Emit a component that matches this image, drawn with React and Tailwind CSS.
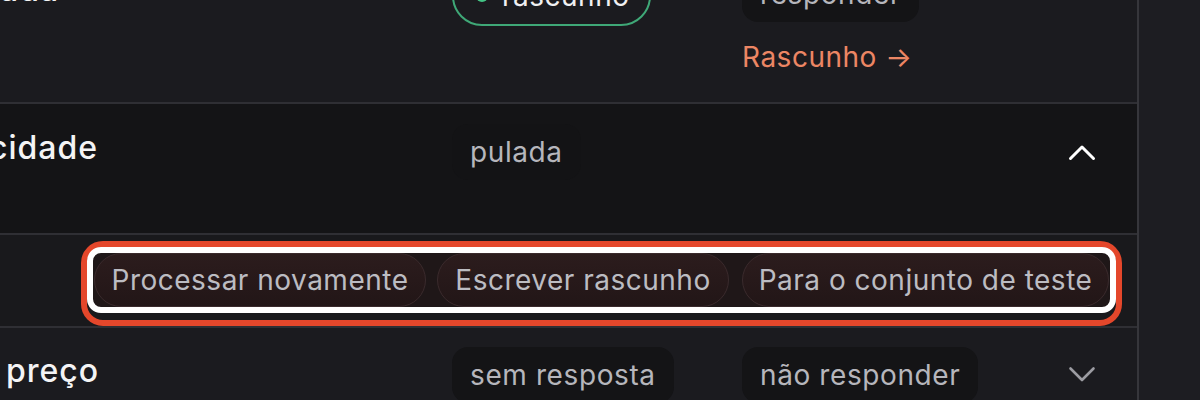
import React from "react";

const font = { fontFamily: "Inter, 'Noto Sans', sans-serif" };

function Chevron({ up, className }) {
  return (
    <svg width="28" height="18" viewBox="0 0 28 18" className={className} fill="none">
      {up ? (
        <polyline points="2.5,15.5 14,4 25.5,15.5" stroke="currentColor" strokeWidth="3" strokeLinecap="round" strokeLinejoin="round" />
      ) : (
        <polyline points="2.5,2.5 14,14 25.5,2.5" stroke="currentColor" strokeWidth="2.6" strokeLinecap="round" strokeLinejoin="round" />
      )}
    </svg>
  );
}

function Pill({ children, className = "" }) {
  return (
    <span className={"inline-flex h-[56px] items-center rounded-[16px] px-[18px] text-[28px] leading-[40px] tracking-[0.6px] text-[#b6b6bc] " + className}>
      {children}
    </span>
  );
}

const btn =
  "h-[54px] rounded-full border border-[#3a2a2c] bg-gradient-to-b from-[#2c1c1d] to-[#221617] text-[28px] leading-[40px] tracking-[0.5px] text-[#bcbcc2]";

export default function App() {
  return (
    <div className="flex h-[400px] w-[1200px] overflow-hidden bg-[#1d1d22]" style={font}>
      <div className="flex w-[1139px] shrink-0 flex-col border-r-2 border-[#36363b]">
        <div className="-mt-[54px] flex flex-col">
          {/* Row 1 */}
          <div className="grid h-[158px] grid-cols-[452px_290px_1fr_69px] border-b-2 border-[#2f2f34] bg-[#1b1b1f] pt-[20px]">
            <div className="text-[32px] font-medium leading-[48px] tracking-[1px] text-[#f4f4f5]">ada</div>
            <div>
              <span className="inline-flex h-[60px] items-center gap-[14px] rounded-full border-2 border-[#3fa877] pl-[22px] pr-[20px] text-[28px] leading-[40px] tracking-[0.5px] text-[#f0f0f2]">
                <span className="h-[12px] w-[12px] rounded-full bg-[#43c585]" />
                rascunho
              </span>
            </div>
            <div className="flex flex-col items-start">
              <Pill className="bg-[#141416]">responder</Pill>
              <span className="mt-[15px] text-[28px] leading-[40px] tracking-[0.5px] text-[#ec8664]">Rascunho →</span>
            </div>
            <div />
          </div>

          {/* Row 2 */}
          <div className="grid h-[131px] grid-cols-[452px_290px_1fr_69px] border-b-2 border-[#2f2f34] bg-[#141416] pt-[20px]">
            <div className="-ml-[11px] text-[32px] font-medium leading-[48px] tracking-[1px] text-[#f4f4f5]">cidade</div>
            <div>
              <Pill className="bg-[#131315]">pulada</Pill>
            </div>
            <div />
            <div className="flex h-[56px] items-center">
              <Chevron up className="ml-[0px] text-white" />
            </div>
          </div>

          {/* Row 3 */}
          <div className="flex h-[93px] justify-end border-b-2 border-[#2f2f34] bg-[#19191c] pr-[15px] pt-[6px]">
            <div className="rounded-[22px] border-[6px] border-[#e4472b]">
              <div className="flex gap-[11px] rounded-[14px] border-[6px] border-white bg-[#1f1718] px-[1px]">
                <button className={btn + " w-[332px]"}>Processar novamente</button>
                <button className={btn + " w-[292px]"}>Escrever rascunho</button>
                <button className={btn + " ml-[2px] w-[367px]"}>Para o conjunto de teste</button>
              </div>
            </div>
          </div>

          {/* Row 4 */}
          <div className="grid h-[140px] grid-cols-[452px_290px_1fr_69px] bg-[#1b1b1f] pt-[19px]">
            <div className="ml-[6px] text-[32px] font-medium leading-[48px] tracking-[1px] text-[#f4f4f5]">preço</div>
            <div>
              <Pill className="bg-[#141416]">sem resposta</Pill>
            </div>
            <div>
              <Pill className="bg-[#141416]">não responder</Pill>
            </div>
            <div className="flex h-[56px] items-center">
              <Chevron className="ml-[0px] text-[#9c9ca2]" />
            </div>
          </div>
        </div>
      </div>
      <div className="flex-1" />
    </div>
  );
}
